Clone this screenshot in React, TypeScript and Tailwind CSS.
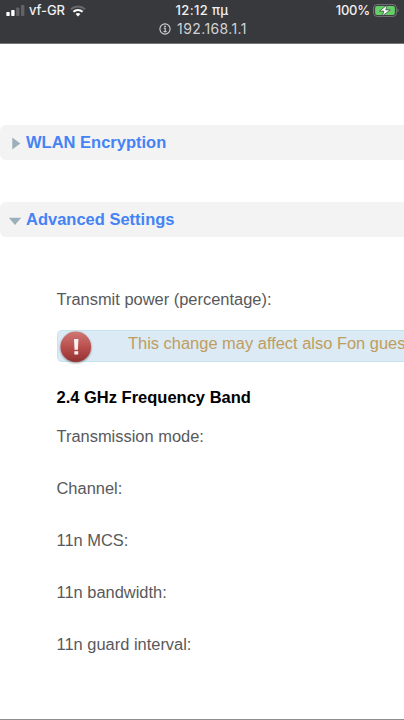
import React from "react";

const labels = [
  "Transmission mode:",
  "Channel:",
  "11n MCS:",
  "11n bandwidth:",
  "11n guard interval:",
];

export default function App() {
  return (
    <div className="flex h-[720px] w-[404px] flex-col overflow-hidden border-b border-[#8e8e90] bg-white font-['Liberation_Sans',Arial,sans-serif] text-[16.45px] text-[#58595b]">
      <StatusBar />
      <main className="pt-[81px]">
        <SectionTitle title="WLAN Encryption" />
        <SectionTitle title="Advanced Settings" open className="mt-[42px]" />
        <div className="pl-[56.5px]">
          <p className="mt-[49px] h-[26px] leading-[26px]">
            Transmit power (percentage):
          </p>
          <Alert>This change may affect also Fon gues</Alert>
          <h3 className="mt-[22px] h-[26px] text-[16.5px] leading-[26px] font-bold text-black">
            2.4 GHz Frequency Band
          </h3>
          <ul className="mt-[13px] flex flex-col gap-[26px]">
            {labels.map((label) => (
              <li key={label} className="h-[26px] leading-[26px]">
                {label}
              </li>
            ))}
          </ul>
        </div>
      </main>
    </div>
  );
}

function StatusBar() {
  return (
    <header className="h-[44px] shrink-0 border-b border-[#77777a] bg-[#38393d] font-[Inter,sans-serif] text-[#f0f0f1]">
      <div className="grid h-[20px] grid-cols-3 items-center text-[13px] leading-[20px] font-medium">
        <div className="flex items-center pl-[6px]">
          <SignalIcon />
          <span className="ml-[4px] tracking-[-0.1px]">vf-GR</span>
          <WifiIcon />
        </div>
        <span className="text-center tracking-[0.35px]">12:12 πμ</span>
        <div className="flex items-center justify-end pr-[5px]">
          <span className="tracking-[-0.2px]">100%</span>
          <BatteryIcon />
        </div>
      </div>
      <div className="flex h-[17px] items-center justify-center gap-[6px] pl-[2px] text-[14px] text-[#d2d2d4]">
        <svg width="12" height="12" viewBox="0 0 12 12" fill="none">
          <circle cx="6" cy="6" r="5.1" stroke="currentColor" strokeWidth="1.1" />
          <circle cx="6" cy="3.4" r="0.9" fill="currentColor" />
          <path d="M4.8 5.2h1.4v3.3M4.6 8.6h3" stroke="currentColor" strokeWidth="1.1" />
        </svg>
        <span className="tracking-[0.4px]">192.168.1.1</span>
      </div>
    </header>
  );
}

function SectionTitle({
  title,
  open,
  className = "",
}: {
  title: string;
  open?: boolean;
  className?: string;
}) {
  return (
    <h2
      className={`flex h-[35px] items-center rounded-l-[6px] bg-[#f3f3f3] text-[16.5px] font-bold text-[#4583f5] ${className}`}
    >
      <svg
        width="14"
        height="14"
        viewBox="0 0 14 14"
        className="mr-[4px] ml-[8px] shrink-0"
        fill="#9ab0ba"
      >
        {open ? (
          <path d="M.8 4.8h12.4L7 12z" />
        ) : (
          <path d="M4.3 1.5v12l8-6z" />
        )}
      </svg>
      <span>{title}</span>
    </h2>
  );
}

function Alert({ children }: { children: React.ReactNode }) {
  return (
    <div className="mt-[18px] flex h-[32px] items-center rounded-l-[5px] border border-r-0 border-[#c5e5ee] bg-[#dbeaf4] text-[#bf9d60]">
      <svg
        width="36"
        height="36"
        viewBox="0 0 36 36"
        className="shrink-0 overflow-visible"
      >
        <defs>
          <linearGradient id="alert" x1="0" y1="0" x2="0" y2="1">
            <stop offset="0" stopColor="#cf7775" />
            <stop offset="0.5" stopColor="#b9504e" />
            <stop offset="1" stopColor="#94302f" />
          </linearGradient>
          <filter id="shadow" x="-20%" y="-20%" width="140%" height="140%">
            <feDropShadow dx="0" dy="1" stdDeviation="0.8" floodOpacity="0.45" />
          </filter>
        </defs>
        <circle
          cx="17.8"
          cy="18.8"
          r="15.3"
          fill="url(#alert)"
          filter="url(#shadow)"
        />
        <path d="M16 11h4.4l-.5 10.8h-3.4z" fill="#f7f1f1" />
        <rect x="16.3" y="23.2" width="3.9" height="3.3" fill="#f7f1f1" />
      </svg>
      <span className="mb-[5px] ml-[34.5px] whitespace-nowrap">{children}</span>
    </div>
  );
}

function SignalIcon() {
  return (
    <svg width="19" height="12" viewBox="0 0 19 12">
      <rect x="0.3" y="8" width="3.4" height="4" rx="0.8" fill="#fff" />
      <rect x="5.2" y="6" width="3.4" height="6" rx="0.8" fill="#fff" />
      <rect x="10.1" y="3.5" width="3.4" height="8.5" rx="0.8" fill="#636367" />
      <rect x="15" y="1" width="3.4" height="11" rx="0.8" fill="#636367" />
    </svg>
  );
}

function WifiIcon() {
  return (
    <svg
      width="16"
      height="12"
      viewBox="0 0 16 12"
      fill="none"
      className="mt-px ml-[5px]"
    >
      <path d="M1 4.2a10.2 10.2 0 0 1 14 0" stroke="#68686c" strokeWidth="2" />
      <path d="M3.4 6.8a6.8 6.8 0 0 1 9.2 0" stroke="#fff" strokeWidth="2" />
      <path d="M8 11.4 5.6 9.1a3.6 3.6 0 0 1 4.8 0z" fill="#fff" />
    </svg>
  );
}

function BatteryIcon() {
  return (
    <svg width="26" height="13" viewBox="0 0 26 13" className="ml-[3px]">
      <rect
        x="0.6"
        y="0.6"
        width="22.8"
        height="11.8"
        rx="3.3"
        fill="none"
        stroke="#75767a"
      />
      <rect x="2.1" y="2.1" width="19.8" height="8.8" rx="1.9" fill="#64ce67" />
      <path d="M24.5 4.5c1.5.6 1.5 3.4 0 4z" fill="#75767a" />
      <path
        d="M14.2 .9 6.6 7.1h4.3L9.2 12.1 17.2 5.9h-4.4z"
        fill="#fff"
        stroke="#38393d"
        strokeWidth="0.7"
      />
    </svg>
  );
}
